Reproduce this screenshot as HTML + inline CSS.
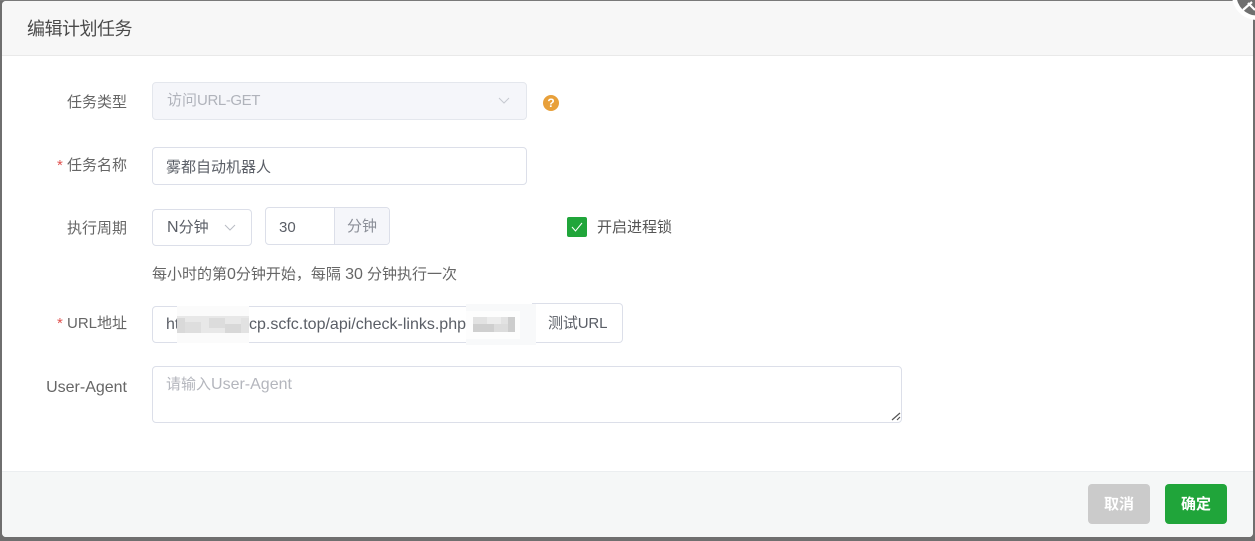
<!DOCTYPE html>
<html lang="zh">
<head>
<meta charset="utf-8">
<style>
html,body{margin:0;padding:0;width:1255px;height:541px;overflow:hidden;background:#6f6f6f;}
body{position:relative;font-family:"Liberation Sans","Noto Sans CJK SC",sans-serif;font-size:15px;color:#606266;}
.a{position:absolute;box-sizing:border-box;white-space:nowrap;}
.dlg{left:2px;top:1px;width:1251px;height:536px;background:#fff;border-radius:4px;overflow:hidden;}
.hd{left:0;top:0;width:1251px;height:55px;background:#f7f7f7;border-bottom:1px solid #e9e9e9;}
.ft{left:0;top:470px;width:1251px;height:66px;background:#f5f7f7;border-top:1px solid #ebeef0;}
.lb{text-align:right;width:127px;left:0;line-height:20px;color:#666;}
.star{color:#e0524f;}
.box{border:1px solid #dcdfe9;border-radius:4px;background:#fff;}
.t{line-height:20px;}
.l{font-size:16px;}
</style>
</head>
<body>
<div class="a" style="left:0;top:0;width:1255px;height:1px;background:#7a7a7a"></div>
<div class="a dlg">
  <div class="a hd"></div>
  <div class="a ft"></div>
</div>

<div class="a t" style="left:27px;top:18px;font-size:18px;line-height:22px;color:#4a4a4a;letter-spacing:-.5px">编辑计划任务</div>

<!-- close button -->
<svg class="a" style="left:1225px;top:0" width="30" height="25">
  <circle cx="32" cy="-5" r="25" fill="#fff"/>
  <circle cx="32" cy="-5" r="20.5" fill="#6f6f6f"/>
  <path d="M18 10L27 2M23 3L30 10" stroke="#fff" stroke-width="2.2" fill="none"/>
</svg>

<!-- row 1 -->
<div class="a lb" style="top:93px">任务类型</div>
<div class="a box" style="left:152px;top:82px;width:375px;height:38px;background:#f5f6fa;border-color:#e4e7ed"></div>
<div class="a t" style="left:167px;top:91px;color:#b0b3bb">访问<span style="letter-spacing:-.4px">URL-GET</span></div>
<svg class="a" style="left:497px;top:96px" width="14" height="10"><path d="M2 2L7 7L12 2" stroke="#c6c9d0" stroke-width="1" fill="none"/></svg>
<div class="a" style="left:543px;top:95px;width:16px;height:16px;border-radius:50%;background:#e8a03a;color:#fff;font-size:12px;font-weight:bold;line-height:16px;text-align:center">?</div>

<!-- row 2 -->
<div class="a lb" style="top:156px"><span class="star">*</span> 任务名称</div>
<div class="a box" style="left:152px;top:147px;width:375px;height:38px"></div>
<div class="a t" style="left:166px;top:158px;color:#5a5e66">雾都自动机器人</div>

<!-- row 3 -->
<div class="a lb" style="top:219px">执行周期</div>
<div class="a box" style="left:152px;top:209px;width:100px;height:37px"></div>
<div class="a t" style="left:167px;top:218px;color:#5a5e66"><span class="l">N</span>分钟</div>
<svg class="a" style="left:223px;top:223px" width="14" height="10"><path d="M2 2L7 7L12 2" stroke="#b9bcc4" stroke-width="1" fill="none"/></svg>
<div class="a box" style="left:265px;top:207px;width:125px;height:38px"></div>
<div class="a" style="left:334px;top:208px;width:55px;height:36px;background:#f5f6fa;border-left:1px solid #dcdfe9;border-radius:0 4px 4px 0"></div>
<div class="a t" style="left:279px;top:218px;color:#5a5e66">30</div>
<div class="a t" style="left:347px;top:217px;color:#8b8f98">分钟</div>
<div class="a" style="left:567px;top:217px;width:20px;height:20px;background:#20a53a;border-radius:2px"></div>
<svg class="a" style="left:567px;top:217px" width="20" height="20"><path d="M5 10L8.5 14L15 6" stroke="#fff" stroke-width="1" fill="none"/></svg>
<div class="a t" style="left:597px;top:218px;color:#555">开启进程锁</div>

<div class="a t" style="left:152px;top:265px;color:#666">每小时的第<span class="l">0</span>分钟开始，每隔 <span class="l">30</span> 分钟执行一次</div>

<!-- row 4 -->
<div class="a lb" style="top:314px"><span class="star">*</span> URL地址</div>
<div class="a box" style="left:152px;top:306px;width:390px;height:37px;border-radius:4px 0 0 4px"></div>
<div class="a box" style="left:532px;top:303px;width:91px;height:40px;border-left:0;border-radius:0 4px 4px 0"></div>
<div class="a t" style="left:548px;top:314px;color:#5a5e66;letter-spacing:-.15px">测试URL</div>
<div class="a t l" style="left:166px;top:315px;color:#5a5e66">ht</div>
<div class="a t l" style="left:249px;top:315px;color:#5a5e66">cp.scfc.top/api/check-links.php</div>

<!-- blur patches -->
<div class="a" style="left:177px;top:306px;width:72px;height:37px;background:#fbfbfb"></div>
<div class="a" style="left:177px;top:316px;width:72px;height:17px;background:#e8e8e8"></div>
<div class="a" style="left:177px;top:318px;width:8px;height:15px;background:#d9d9d9"></div>
<div class="a" style="left:185px;top:322px;width:16px;height:11px;background:#dedede"></div>
<div class="a" style="left:209px;top:318px;width:16px;height:10px;background:#dcdcdc"></div>
<div class="a" style="left:225px;top:324px;width:16px;height:9px;background:#d8d8d8"></div>
<div class="a" style="left:241px;top:318px;width:8px;height:15px;background:#e2e2e2"></div>

<div class="a" style="left:466px;top:304px;width:70px;height:41px;background:#f8f9fa"></div>
<div class="a" style="left:466px;top:311px;width:54px;height:28px;background:#fdfdfd"></div>
<div class="a" style="left:473px;top:317px;width:42px;height:7px;background:#e2e2e2"></div>
<div class="a" style="left:473px;top:324px;width:42px;height:8px;background:#cfcfcf"></div>
<div class="a" style="left:487px;top:317px;width:14px;height:7px;background:#ececec"></div>
<div class="a" style="left:494px;top:324px;width:14px;height:8px;background:#dcdcdc"></div>
<div class="a" style="left:508px;top:317px;width:7px;height:15px;background:#cdcdcd"></div>

<!-- row 5 -->
<div class="a lb l" style="top:378px">User-Agent</div>
<div class="a box" style="left:152px;top:366px;width:750px;height:57px"></div>
<div class="a t" style="left:166px;top:375px;color:#b4b6bd">请输入<span class="l">User-Agent</span></div>
<svg class="a" style="left:890px;top:411px" width="11" height="11"><path d="M2 9L10 2M7 9L10 6" stroke="#555" stroke-width="1.2" fill="none"/></svg>

<!-- footer buttons -->
<div class="a" style="left:1088px;top:484px;width:62px;height:40px;background:#cbcbcb;border-radius:4px;color:#fff;font-size:15px;font-weight:bold;line-height:42px;text-align:center">取消</div>
<div class="a" style="left:1165px;top:484px;width:62px;height:40px;background:#20a53a;border-radius:4px;color:#fff;font-size:15px;font-weight:bold;line-height:42px;text-align:center">确定</div>
</body>
</html>
